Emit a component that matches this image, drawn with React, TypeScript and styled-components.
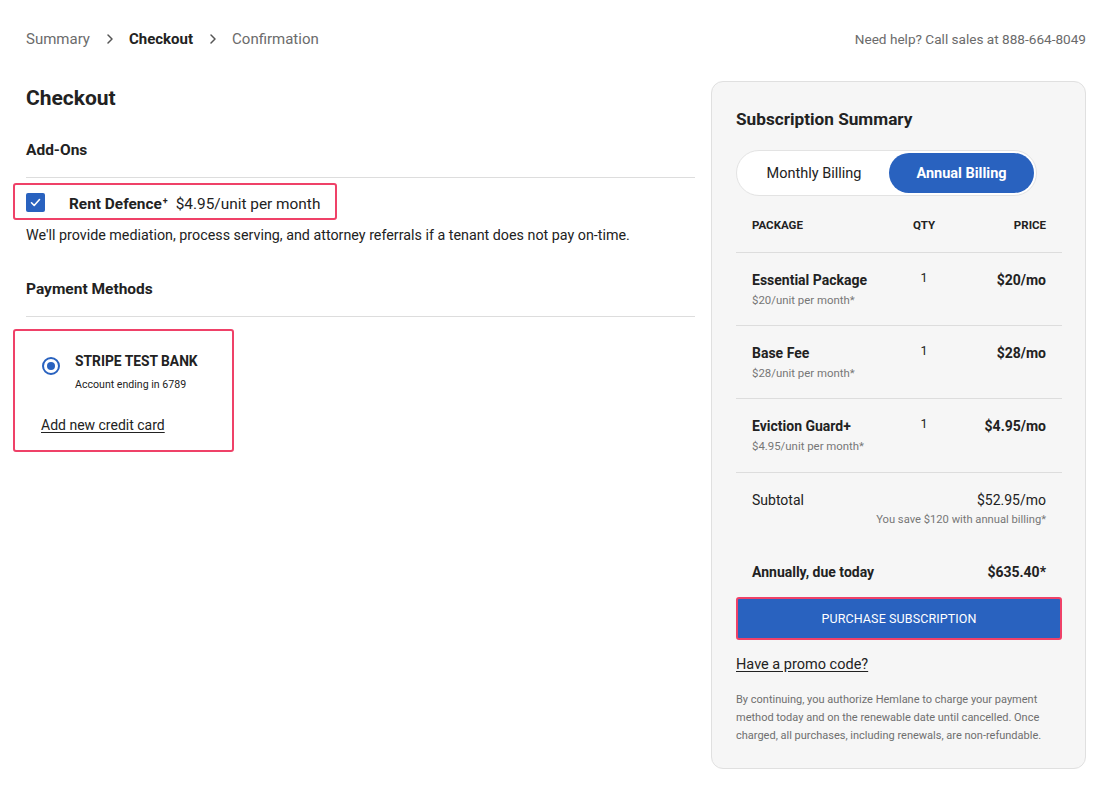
import React from "react";
import styled, { createGlobalStyle } from "styled-components";

const Global = createGlobalStyle`
  html, body { margin: 0; padding: 0; background: #ffffff; }
  body { font-family: Roboto, "Noto Sans", Arial, sans-serif; color: #222222; }
  * { box-sizing: border-box; }
`;

const BLUE = "#2962bf";
const RED = "#ef4168";

const Page = styled.div`
  width: 1103px;
  min-height: 785px;
  padding: 29px 17px 0 26px;
`;

const TopBar = styled.header`
  display: flex;
  justify-content: space-between;
  align-items: center;
  height: 20px;
`;

const Crumbs = styled.nav`
  display: flex;
  align-items: center;
  gap: 14px;
  font-size: 15px;
  line-height: 20px;
  color: #6b6b6b;
`;

const Crumb = styled.span<{ $active?: boolean }>`
  font-weight: ${(p) => (p.$active ? 700 : 400)};
  color: ${(p) => (p.$active ? "#222222" : "#6b6b6b")};
`;

const Chevron = styled.svg`
  width: 10px;
  height: 12px;
  margin-left: 1px;
`;

const Help = styled.span`
  font-size: 13.6px;
  color: #6b6b6b;
  line-height: 20px;
`;

const Body = styled.div`
  display: flex;
  align-items: flex-start;
  gap: 16px;
  margin-top: 32px;
`;

const Main = styled.main`
  flex: 1;
  padding-top: 3px;
`;

const Title = styled.h1`
  margin: 0;
  font-size: 21px;
  line-height: 28px;
  font-weight: 700;
`;

const SectionTitle = styled.h2<{ $gap: number }>`
  margin: ${(p) => p.$gap}px 0 0;
  font-size: 15.5px;
  line-height: 22px;
  font-weight: 700;
  padding-bottom: 16px;
  border-bottom: 1px solid #dddddd;
`;

const Highlight = styled.div`
  border: 2px solid ${RED};
  border-radius: 3px;
  margin-left: -13px;
`;

const AddOnBox = styled(Highlight)`
  margin-top: 5px;
  width: 324px;
  height: 37px;
  display: flex;
  align-items: center;
  padding: 2px 11px 0;
  gap: 24px;
`;

const CheckBox = styled.span`
  width: 19px;
  height: 19px;
  border-radius: 2px;
  background: ${BLUE};
  display: inline-flex;
  align-items: center;
  justify-content: center;
`;

const AddOnLabel = styled.span`
  font-size: 15.4px;
  line-height: 20px;
  display: flex;
  align-items: baseline;
  gap: 8px;
  margin-top: 2px;
`;

const Strong = styled.b`
  font-weight: 700;
  sup {
    font-size: 9px;
    vertical-align: top;
    position: relative;
    top: -3px;
    margin-left: 1px;
  }
`;

const Description = styled.p`
  margin: 5px 0 0;
  font-size: 14.3px;
  line-height: 20px;
`;

const PaymentBox = styled(Highlight)`
  margin-top: 12px;
  width: 221px;
  padding: 21px 26px 15px;
`;

const MethodRow = styled.div`
  display: flex;
  gap: 15px;
`;

const Radio = styled.span`
  width: 18px;
  height: 18px;
  border-radius: 50%;
  border: 2px solid ${BLUE};
  margin-top: 5px;
  margin-left: 1px;
  display: inline-flex;
  align-items: center;
  justify-content: center;
  flex: none;
  &::after {
    content: "";
    width: 8px;
    height: 8px;
    border-radius: 50%;
    background: ${BLUE};
  }
`;

const MethodName = styled.div`
  font-size: 13.8px;
  line-height: 18px;
  font-weight: 700;
`;

const MethodSub = styled.div`
  margin-top: 7px;
  font-size: 10.6px;
  line-height: 16px;
`;

const TextLink = styled.a<{ $size: number }>`
  display: block;
  color: #222222;
  text-decoration: underline;
  text-underline-offset: 2px;
  font-size: ${(p) => p.$size}px;
  line-height: 20px;
  cursor: pointer;
`;

const AddCard = styled(TextLink)`
  margin-top: 22px;
`;

const Card = styled.aside`
  width: 375px;
  flex: none;
  background: #f6f6f6;
  border: 1px solid #e0e0e0;
  border-radius: 12px;
  padding: 25px 23px 23px 24px;
`;

const CardTitle = styled.h2`
  margin: 0;
  font-size: 17.2px;
  line-height: 24px;
  font-weight: 700;
`;

const Toggle = styled.div`
  margin-top: 19px;
  width: 301px;
  height: 46px;
  border: 1px solid #e3e3e3;
  border-radius: 23px;
  background: #ffffff;
  padding: 2px;
  display: grid;
  grid-template-columns: 150px 145px;
`;

const ToggleOption = styled.button<{ $active?: boolean }>`
  border: none;
  border-radius: 21px;
  font-family: inherit;
  font-size: 14.5px;
  font-weight: ${(p) => (p.$active ? 700 : 400)};
  background: ${(p) => (p.$active ? BLUE : "transparent")};
  color: ${(p) => (p.$active ? "#ffffff" : "#222222")};
  padding: 0;
  cursor: pointer;
`;

const Grid = styled.div<{ $pad: string }>`
  display: grid;
  grid-template-columns: 1fr 60px 92px;
  padding: ${(p) => p.$pad};
  border-bottom: 1px solid #dddddd;
`;

const HeadCell = styled.div<{ $align: string }>`
  font-size: 11.5px;
  line-height: 16px;
  font-weight: 700;
  text-transform: uppercase;
  text-align: ${(p) => p.$align};
`;

const ItemName = styled.div`
  font-size: 14px;
  line-height: 20px;
  font-weight: 700;
`;

const ItemSub = styled.div`
  margin-top: 2px;
  font-size: 11.4px;
  line-height: 16px;
  color: #777777;
`;

const Qty = styled.div`
  text-align: center;
  font-size: 12.5px;
  line-height: 16px;
`;

const Price = styled.div`
  text-align: right;
  font-size: 14px;
  line-height: 20px;
  font-weight: 700;
`;

const Totals = styled.div`
  padding: 17px 16px 0;
`;

const TotalRow = styled.div<{ $bold?: boolean; $gap?: number }>`
  display: flex;
  justify-content: space-between;
  font-size: 14px;
  line-height: 20px;
  font-weight: ${(p) => (p.$bold ? 700 : 400)};
  margin-top: ${(p) => p.$gap ?? 0}px;
`;

const SaveNote = styled.div`
  text-align: right;
  font-size: 11.2px;
  line-height: 14px;
  color: #777777;
  margin-top: 3px;
`;

const Purchase = styled.button`
  display: block;
  margin-top: 15px;
  width: 326px;
  height: 43px;
  border: 2px solid ${RED};
  border-radius: 3px;
  background: ${BLUE};
  color: #ffffff;
  font-family: inherit;
  font-size: 12.5px;
  letter-spacing: 0.1px;
  cursor: pointer;
`;

const Promo = styled(TextLink)`
  margin-top: 15px;
`;

const Fine = styled.p`
  margin: 16px 0 0;
  font-size: 11px;
  line-height: 18px;
  color: #6f6f6f;
`;

const ChevronIcon = () => (
  <Chevron viewBox="0 0 10 12" fill="none">
    <path d="M3 2l4 4-4 4" stroke="#555" strokeWidth="1.5" strokeLinecap="round" strokeLinejoin="round" />
  </Chevron>
);

const items = [
  { name: "Essential Package", sub: "$20/unit per month*", price: "$20/mo" },
  { name: "Base Fee", sub: "$28/unit per month*", price: "$28/mo" },
  { name: "Eviction Guard+", sub: "$4.95/unit per month*", price: "$4.95/mo" },
];

export default function App() {
  return (
    <Page>
      <Global />
      <TopBar>
        <Crumbs>
          <Crumb>Summary</Crumb>
          <ChevronIcon />
          <Crumb $active>Checkout</Crumb>
          <ChevronIcon />
          <Crumb>Confirmation</Crumb>
        </Crumbs>
        <Help>Need help? Call sales at 888-664-8049</Help>
      </TopBar>
      <Body>
        <Main>
          <Title>Checkout</Title>
          <SectionTitle $gap={27}>Add-Ons</SectionTitle>
          <AddOnBox>
            <CheckBox>
              <svg width="13" height="13" viewBox="0 0 13 13" fill="none">
                <path d="M2.5 6.8l2.7 2.7 5.3-6" stroke="#fff" strokeWidth="1.6" strokeLinecap="round" strokeLinejoin="round" />
              </svg>
            </CheckBox>
            <AddOnLabel>
              <Strong>
                Rent Defence<sup>+</sup>
              </Strong>
              <span>$4.95/unit per month</span>
            </AddOnLabel>
          </AddOnBox>
          <Description>
            We'll provide mediation, process serving, and attorney referrals if a tenant does not pay on-time.
          </Description>
          <SectionTitle $gap={33}>Payment Methods</SectionTitle>
          <PaymentBox>
            <MethodRow>
              <Radio />
              <div>
                <MethodName>STRIPE TEST BANK</MethodName>
                <MethodSub>Account ending in 6789</MethodSub>
              </div>
            </MethodRow>
            <AddCard $size={14}>Add new credit card</AddCard>
          </PaymentBox>
        </Main>
        <Card>
          <CardTitle>Subscription Summary</CardTitle>
          <Toggle>
            <ToggleOption>Monthly Billing</ToggleOption>
            <ToggleOption $active>Annual Billing</ToggleOption>
          </Toggle>
          <Grid $pad="21px 16px 19px">
            <HeadCell $align="left">Package</HeadCell>
            <HeadCell $align="center">Qty</HeadCell>
            <HeadCell $align="right">Price</HeadCell>
          </Grid>
          {items.map((it, i) => (
            <Grid key={it.name} $pad={i === 2 ? "17px 16px 18px" : "17px 16px 17px"}>
              <div>
                <ItemName>{it.name}</ItemName>
                <ItemSub>{it.sub}</ItemSub>
              </div>
              <Qty>1</Qty>
              <Price>{it.price}</Price>
            </Grid>
          ))}
          <Totals>
            <TotalRow>
              <span>Subtotal</span>
              <span>$52.95/mo</span>
            </TotalRow>
            <SaveNote>You save $120 with annual billing*</SaveNote>
            <TotalRow $bold $gap={35}>
              <span>Annually, due today</span>
              <span>$635.40*</span>
            </TotalRow>
          </Totals>
          <Purchase>PURCHASE SUBSCRIPTION</Purchase>
          <Promo $size={14.5}>Have a promo code?</Promo>
          <Fine>
            By continuing, you authorize Hemlane to charge your payment method today and on the renewable date until
            cancelled. Once charged, all purchases, including renewals, are non-refundable.
          </Fine>
        </Card>
      </Body>
    </Page>
  );
}
